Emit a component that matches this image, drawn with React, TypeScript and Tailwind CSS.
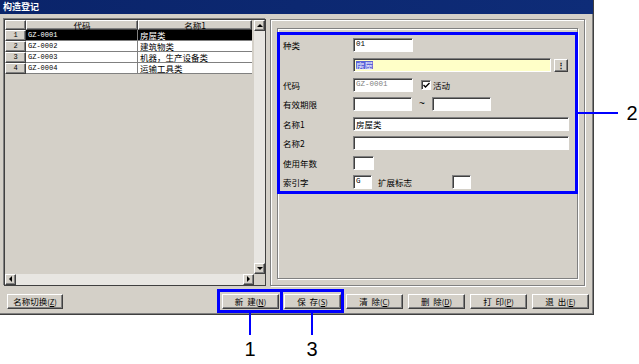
import type { ReactNode } from "react";

const raised =
  "bg-[#d4d0c8] border border-t-white border-l-white border-r-[#404040] border-b-[#404040] shadow-[inset_-1px_-1px_0_#808080]";
const sunken =
  "border border-t-[#808080] border-l-[#808080] border-r-white border-b-white shadow-[inset_1px_1px_0_#404040]";
const etched = "border border-[#808080] shadow-[inset_1px_1px_0_white,1px_1px_0_white]";
const mono = "font-['Liberation_Mono',monospace]";

const rows = [
  { no: "1", code: "GZ-0001", name: "房屋类" },
  { no: "2", code: "GZ-0002", name: "建筑物类" },
  { no: "3", code: "GZ-0003", name: "机器，生产设备类" },
  { no: "4", code: "GZ-0004", name: "运输工具类" },
];

function Arrow({ dir }: { dir: "up" | "down" | "left" | "right" }) {
  const pts = {
    up: "1,4 4,1 7,4",
    down: "1,1 4,4 7,1",
    left: "4,0 1,3 4,6",
    right: "1,0 4,3 1,6",
  }[dir];
  const vertical = dir === "up" || dir === "down";
  return (
    <svg width={vertical ? 8 : 5} height={vertical ? 5 : 7} viewBox={vertical ? "0 0 8 5" : "0 0 5 7"}>
      <polygon points={pts} fill="#000" />
    </svg>
  );
}

function ScrollBtn({ dir }: { dir: "up" | "down" | "left" | "right" }) {
  return (
    <div className={`${raised} w-[11px] h-[11px] shrink-0 flex items-center justify-center`}>
      <Arrow dir={dir} />
    </div>
  );
}

function DataGrid() {
  return (
    <div className="w-[262px] h-[267px] border border-[#404040] shadow-[-1px_-1px_0_#808080] flex flex-col bg-[#d4d0c8]">
      <div className="flex flex-1 min-h-0">
        <div className="flex-1 flex flex-col">
          {/* header */}
          <div className="flex h-[10px] text-[8.5px] leading-none">
            <div className={`${raised} w-[21px]`} />
            <div className={`${raised} w-[112px] flex items-center justify-center`}>代码</div>
            <div className={`${raised} w-[114px] flex items-center justify-center`}>名称1</div>
          </div>
          {rows.map((r, i) => {
            const sel = i === 0;
            return (
              <div key={r.no} className="flex h-[11px] leading-none">
                <div className={`${raised} w-[21px] flex items-center justify-center text-[7px] ${mono}`}>{r.no}</div>
                <div
                  className={`w-[112px] border-r border-b border-[#808080] flex items-center pl-[2px] text-[7px] ${mono} ${
                    sel ? "bg-black text-white" : "bg-white text-black"
                  }`}
                >
                  {r.code}
                </div>
                <div
                  className={`w-[114px] border-b border-[#808080] flex items-center pl-[2px] text-[8.5px] ${
                    sel ? "bg-black text-white" : "bg-white text-black"
                  }`}
                >
                  {r.name}
                </div>
              </div>
            );
          })}
        </div>
        {/* vertical scrollbar */}
        <div className="w-[11px] flex flex-col">
          <ScrollBtn dir="up" />
          <div className="flex-1 bg-[#e8e6e2]" />
          <ScrollBtn dir="down" />
        </div>
      </div>
      {/* horizontal scrollbar */}
      <div className="flex h-[11px]">
        <ScrollBtn dir="left" />
        <div className="flex-1 bg-[#e8e6e2]" />
        <ScrollBtn dir="right" />
        <div className="w-[11px] bg-[#d4d0c8]" />
      </div>
    </div>
  );
}

function Input({ className = "", children }: { className?: string; children?: ReactNode }) {
  return (
    <div className={`${sunken} h-[14px] shrink-0 flex items-center pl-[2px] leading-none ${className}`}>{children}</div>
  );
}

function Row({ label, className = "", children }: { label: string; className?: string; children: ReactNode }) {
  return (
    <div className={`flex items-center h-[14px] ${className}`}>
      <div className="w-[70px] text-[8.5px] leading-none">{label}</div>
      {children}
    </div>
  );
}

function Checkbox() {
  return (
    <div className={`${sunken} bg-white w-[10px] h-[10px] flex items-center justify-center`}>
      <svg width="7" height="7" viewBox="0 0 7 7">
        <path d="M0.5 3 L2.5 5 L6.5 1" stroke="#000" strokeWidth="1.4" fill="none" />
      </svg>
    </div>
  );
}

function Form() {
  return (
    <div className={`${etched} w-[315px] h-[267px] pt-[8px] px-[6px] pb-[6px]`}>
      <div className={`${etched} h-full flex flex-col pt-[9px] pl-[5px]`}>
        <Row label="种类">
          <Input className={`w-[60px] bg-white text-[7.5px] ${mono}`}>01</Input>
        </Row>
        <Row label="" className="mt-[6px]">
          <Input className="w-[198px] bg-[#ffffc8] text-[8.5px]">
            <span className="bg-[#5c64d8] text-[#eef0ff]">房屋</span>
          </Input>
          <div className={`${raised} ml-[3px] w-[14px] h-[13px] flex items-center justify-center text-[8px] font-bold leading-none`}>
            ⋮
          </div>
        </Row>
        <Row label="代码" className="mt-[6px]">
          <Input className={`w-[60px] bg-white text-[7.5px] text-[#808080] ${mono}`}>GZ-0001</Input>
          <div className="ml-[8px]">
            <Checkbox />
          </div>
          <span className="ml-[2px] text-[8.5px] leading-none">活动</span>
        </Row>
        <Row label="有效期限" className="mt-[5px]">
          <Input className="w-[59px] bg-white" />
          <span className="w-[20px] text-center text-[10px] leading-none font-['Liberation_Sans',sans-serif]">~</span>
          <Input className="w-[59px] bg-white" />
        </Row>
        <Row label="名称1" className="mt-[6px]">
          <Input className="w-[216px] bg-white text-[8.5px]">房屋类</Input>
        </Row>
        <Row label="名称2" className="mt-[5px]">
          <Input className="w-[216px] bg-white" />
        </Row>
        <Row label="使用年数" className="mt-[6px]">
          <Input className="w-[21px] bg-white" />
        </Row>
        <Row label="索引字" className="mt-[5px]">
          <Input className={`w-[19px] bg-white text-[7.5px] ${mono}`}>G</Input>
          <span className="ml-[6px] w-[74px] text-[8.5px] leading-none">扩展标志</span>
          <Input className="w-[19px] bg-white" />
        </Row>
      </div>
    </div>
  );
}

function Button({ main, hot, className = "" }: { main: string; hot: string; className?: string }) {
  return (
    <div className={`${raised} h-[15px] flex items-center justify-center text-[8.5px] leading-none whitespace-pre ${className}`}>
      {main}
      <span className="text-[7.5px]">
        (<span className="underline">{hot}</span>)
      </span>
    </div>
  );
}

export default function App() {
  return (
    <div className="relative w-[639px] h-[364px] bg-white overflow-hidden text-black font-['Noto_Sans_CJK_SC',sans-serif]">
      {/* window */}
      <div className="w-[594px] h-[315px] bg-[#d4d0c8] border-r border-b border-[#404040] shadow-[inset_-1px_-1px_0_#808080] flex flex-col">
        <div className="h-[14px] bg-linear-to-r from-[#0a246a] to-[#0e2c78] text-white font-bold text-[9px] leading-[14px] pl-[3px]">
          构造登记
        </div>
        <div className="flex mt-[5px] ml-[4px] gap-[4px]">
          <DataGrid />
          <Form />
        </div>
        <div className="flex mt-[8px] pl-[7px]">
          <Button main="名称切换" hot="Z" className="w-[56px]" />
          <div className="flex gap-[5px] ml-[159px]">
            <Button main="新  建" hot="N" className="w-[57px]" />
            <Button main="保  存" hot="S" className="w-[57px]" />
            <Button main="清  除" hot="C" className="w-[57px]" />
            <Button main="删  除" hot="D" className="w-[57px]" />
            <Button main="打  印" hot="P" className="w-[57px]" />
            <Button main="退  出" hot="E" className="w-[57px]" />
          </div>
        </div>
      </div>

      {/* callouts */}
      <div className="absolute left-[277px] top-[32px] w-[301px] h-[162px] border-[3px] border-[#0000ff]" />
      <div className="absolute left-[578px] top-[112px] w-[40px] h-[2px] bg-[#0000ff]" />
      <div className="absolute left-[622px] top-[103px] w-[20px] text-center text-[20px] leading-[20px] font-['Liberation_Sans',sans-serif]">
        2
      </div>
      <div className="absolute left-[217px] top-[289px] w-[66px] h-[24px] border-[3px] border-[#0000ff]" />
      <div className="absolute left-[280px] top-[289px] w-[64px] h-[24px] border-[3px] border-[#0000ff]" />
      <div className="absolute left-[249px] top-[312px] w-[2px] h-[23px] bg-[#0000ff]" />
      <div className="absolute left-[311px] top-[312px] w-[2px] h-[23px] bg-[#0000ff]" />
      <div className="absolute left-[240px] top-[339px] w-[20px] text-center text-[20px] leading-[20px] font-['Liberation_Sans',sans-serif]">
        1
      </div>
      <div className="absolute left-[302px] top-[339px] w-[20px] text-center text-[20px] leading-[20px] font-['Liberation_Sans',sans-serif]">
        3
      </div>
    </div>
  );
}
